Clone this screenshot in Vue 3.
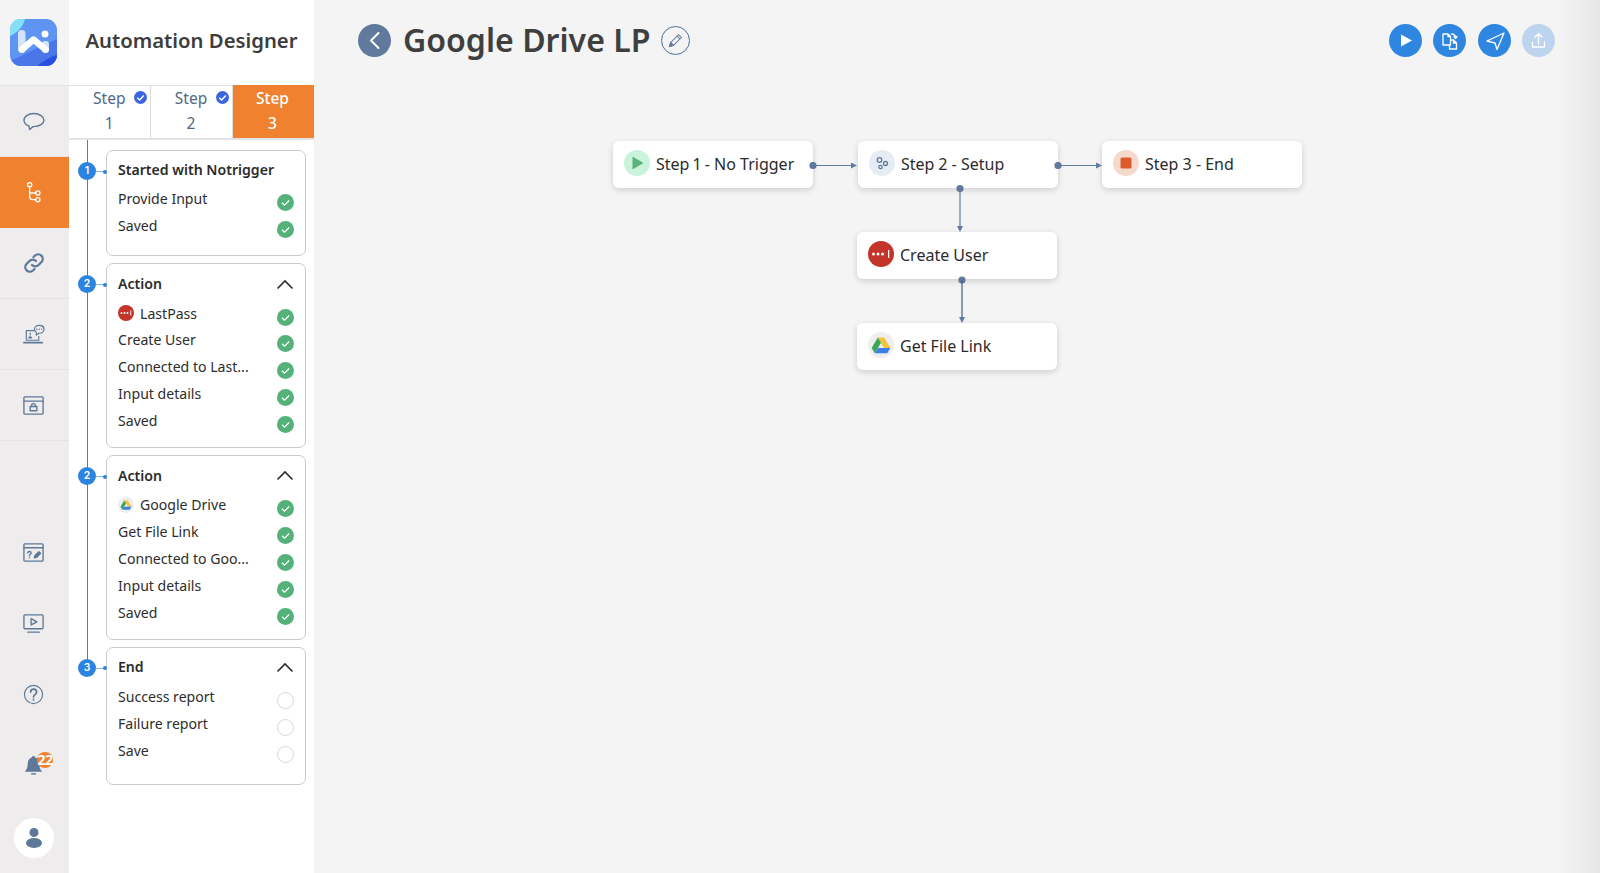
<script setup>
const cards = [
  { num: 1, title: 'Started with Notrigger', kind: 'first', rows: [
    { t: 'Provide Input', done: true }, { t: 'Saved', done: true } ] },
  { num: 2, title: 'Action', chevron: true, rows: [
    { t: 'LastPass', icon: 'lastpass', done: true }, { t: 'Create User', done: true },
    { t: 'Connected to Last...', done: true }, { t: 'Input details', done: true }, { t: 'Saved', done: true } ] },
  { num: 2, title: 'Action', chevron: true, rows: [
    { t: 'Google Drive', icon: 'drive', done: true }, { t: 'Get File Link', done: true },
    { t: 'Connected to Goo...', done: true }, { t: 'Input details', done: true }, { t: 'Saved', done: true } ] },
  { num: 3, title: 'End', chevron: true, kind: 'last', rows: [
    { t: 'Success report' }, { t: 'Failure report' }, { t: 'Save' } ] },
]
const nodes = [
  { t: 'Step 1 - No Trigger', x: 299, y: 56, icon: 'play' },
  { t: 'Step 2 - Setup', x: 544, y: 56, icon: 'gears' },
  { t: 'Step 3 - End', x: 788, y: 56, icon: 'stop' },
  { t: 'Create User', x: 543, y: 147, icon: 'lastpass' },
  { t: 'Get File Link', x: 543, y: 238, icon: 'drive' },
]
const nodeStyle = n => ({ left: n.x + 'px', top: n.y + 'px' })
</script>

<template>
  <div class="app">
    <aside class="rail">
      <div class="logo-box">
        <svg class="logo" viewBox="0 0 47 47">
          <defs><clipPath id="lc"><rect width="47" height="47" rx="11" /></clipPath></defs>
          <g clip-path="url(#lc)">
            <rect width="47" height="47" fill="#5e95f3" />
            <path d="M0 0h15C13 8 7 14 0 17z" fill="#84e0f5" />
            <path d="M0 42C14 36 32 26 47 20V47H0z" fill="#4a76ea" />
            <path d="M27 47C33 42 40 38 47 36V47z" fill="#2a4fe0" />
            <rect x="8" y="11" width="7.500" height="23" rx="3.700" fill="#d4e2fb" />
            <rect x="32" y="22" width="7" height="12" rx="3" fill="#d4e2fb" />
            <path d="M12 30.500l11.500-10 12 10" fill="none" stroke="#fff" stroke-width="6.500" stroke-linecap="round" stroke-linejoin="round" />
            <circle cx="35" cy="15" r="3.500" fill="#fff" />
          </g>
        </svg>
      </div>
      <div class="rail-item">
        <svg viewBox="0 0 24 24" class="ri big"><path d="M12 4.500c-5.500 0-10 2.900-10 6.700 0 2.500 2 4.700 5 5.800l.6 3.500 3.500-2.900h.9c5.500 0 10-3 10-6.400S17.500 4.500 12 4.500z" /></svg>
      </div>
      <div class="rail-item active">
        <svg viewBox="0 0 24 24" class="ri"><circle cx="8" cy="4" r="2.200" /><circle cx="16.500" cy="12.500" r="2.200" /><circle cx="16.500" cy="19.500" r="2.200" /><path d="M8 6.200V16.500c0 2 1 3 3 3h3.300M8 12.500h6.300" /></svg>
      </div>
      <div class="rail-item">
        <svg viewBox="0 0 24 24" class="ri thick big"><path d="M10 14a4.500 4.500 0 0 0 6.500 0l3-3A4.600 4.600 0 0 0 13 4.500l-1.500 1.500" /><path d="M14 10a4.500 4.500 0 0 0-6.500 0l-3 3a4.600 4.600 0 0 0 6.500 6.500l1.500-1.500" /></svg>
      </div>
      <div class="rail-item">
        <svg viewBox="0 0 24 24" class="ri thin"><path d="M14 8H4.500v10h13v-4" /><path d="M2 20.500h19" stroke-width="1.800" /><path d="M7 15.500c0-1.500 3-1.500 3 0zM8.500 10.500v2" /><path d="M18 2.500c-2.800 0-5 1.800-5 4 0 1.300.8 2.500 2 3.200v3l2.500-2H18c2.800 0 5-1.800 5-4.200s-2.200-4-5-4z" fill="#eeeced" /><path d="M15.500 6.500h.01M18 6.500h.01M20.500 6.500h.01" stroke-width="1.500" /></svg>
      </div>
      <div class="rail-item">
        <svg viewBox="0 0 24 24" class="ri"><rect x="2" y="3" width="20" height="18" rx="1" /><path d="M2 7.500h20" /><rect x="8.500" y="13" width="7" height="4.500" /><path d="M10 13v-1a2 2 0 0 1 4 0v1" /></svg>
      </div>
      <div class="rail-spacer"></div>
      <div class="rail-foot">
        <svg viewBox="0 0 24 24" class="ri"><rect x="2" y="3" width="20" height="18" rx="1" /><path d="M2 7h20" /><path d="M6 12.500c0-2 3.500-2 3.500 0 0 1.300-1.700 1.300-1.700 3M7.800 17.500h.01" /><path d="M13 17.500l.6-2.400 4-4 1.800 1.800-4 4z" fill="#5d7898" /></svg>
      </div>
      <div class="rail-foot">
        <svg viewBox="0 0 24 24" class="ri"><rect x="2" y="3" width="20" height="14.500" rx="1" /><path d="M9.500 7l6 3.300-6 3.200zM6 21h12" /></svg>
      </div>
      <div class="rail-foot">
        <svg viewBox="0 0 24 24" class="ri thin"><circle cx="12" cy="12" r="9.500" /><path d="M9 9.500c0-4 6.200-4 6.200 0 0 2.600-3.200 2.600-3.200 5M12 17.200v.3" stroke-width="1.800" /></svg>
      </div>
      <div class="rail-foot bell">
        <svg viewBox="0 0 24 24" class="ri solid"><path d="M12 2c-1 0-1.500.7-1.500 1.500C7.500 4.500 6 7 6 10c0 4-1 6.500-3 8.500h18c-2-2-3-4.500-3-8.500 0-3-1.500-5.500-4.500-6.500C13.500 2.700 13 2 12 2z" /><path d="M9.500 20h5v1.500h-5z" /></svg>
        <span class="count">22</span>
      </div>
      <div class="rail-user">
        <div class="avatar">
          <svg viewBox="0 0 24 24"><circle cx="12" cy="6.500" r="4.500" /><ellipse cx="12" cy="17" rx="8" ry="5" /></svg>
        </div>
      </div>
    </aside>

    <section class="panel">
      <div class="panel-head">Automation Designer</div>
      <div class="tabs">
        <div class="tab"><span>Step</span><span>1</span><i class="tick"><svg viewBox="0 0 12 12"><path d="M3 6.200l2.200 2.100L9 4.200" /></svg></i></div>
        <div class="tab"><span>Step</span><span>2</span><i class="tick"><svg viewBox="0 0 12 12"><path d="M3 6.200l2.200 2.100L9 4.200" /></svg></i></div>
        <div class="tab on"><span>Step</span><span>3</span></div>
      </div>
      <div class="flow">
        <div class="line"></div>
        <div v-for="(c, i) in cards" :key="i" class="card" :class="c.kind">
          <span class="badge">{{ c.num }}</span>
          <span class="link"></span>
          <div class="card-head">
            <span class="head-text">{{ c.title }}</span>
            <svg v-if="c.chevron" class="chev" viewBox="0 0 18 11"><path d="M1.500 9.500L9 2l7.500 7.500" /></svg>
          </div>
          <div v-for="r in c.rows" :key="r.t" class="row">
            <span class="row-text">
              <svg v-if="r.icon === 'lastpass'" class="mini" viewBox="0 0 16 16"><circle cx="8" cy="8" r="8" fill="#c4342a" /><circle cx="3.500" cy="8" r="1" fill="#fff" /><circle cx="6.500" cy="8" r="1" fill="#fff" /><circle cx="9.500" cy="8" r="1" fill="#fff" /><rect x="12.300" y="5.500" width=".9" height="5" fill="#fff" /></svg>
              <svg v-if="r.icon === 'drive'" class="mini" viewBox="0 0 16 16"><circle cx="8" cy="8" r="8" fill="#eeeeee" /><path d="M6.200 3.500h3.600l3.700 6.300h-3.600z" fill="#f5c33b" /><path d="M6.200 3.500L2.500 9.800l1.800 3 3.700-6.300z" fill="#3aa757" /><path d="M4.300 12.800h7.400l1.800-3H6.100z" fill="#3f7ee8" /></svg>
              {{ r.t }}
            </span>
            <span v-if="r.done" class="ok"><svg viewBox="0 0 17 17"><path d="M5 8.800l2.500 2.300L12.200 6.500" /></svg></span>
            <span v-else class="todo"></span>
          </div>
        </div>
      </div>
    </section>

    <main class="main">
      <header class="top">
        <div class="back"><svg viewBox="0 0 33 33"><path d="M20.500 9l-7.500 7.500 7.500 7.500" /></svg></div>
        <h1>Google Drive LP</h1>
        <div class="edit"><svg viewBox="0 0 24 24"><path d="M4.500 19.500l1.500-5L15.800 4.700l3.500 3.500-9.800 9.800z" /><path d="M4.500 19.500l1.500-5 3.500 3.500z" fill="#5f7a9c" /><path d="M14 6.500l3.500 3.500" /></svg></div>
        <div class="actions">
          <div class="act"><svg viewBox="0 0 33 33"><path d="M12 10.500l11 6-11 6z" fill="#fff" stroke="none" /></svg></div>
          <div class="act"><svg viewBox="0 0 33 33"><path d="M10 10h5l2.500 2.500V21H10zM15 10v2.500h2.500M17.500 16h3l3 3v6h-7v-4M20.500 16v3h3M18.500 10c2.500 0 4 1.500 4 4M21 12.500l1.500 2 1.500-2" /></svg></div>
          <div class="act"><svg viewBox="0 0 33 33"><path d="M26 9L9 17l8 2 2 6.500z" /></svg></div>
          <div class="act off"><svg viewBox="0 0 33 33"><path d="M16.500 20V9.500M13 13l3.500-3.500L20 13M10.500 18v5h12v-5" /></svg></div>
        </div>
      </header>
      <div class="canvas">
        <div v-for="n in nodes" :key="n.t" class="node" :style="nodeStyle(n)">
          <span class="nicon" :class="n.icon">
            <svg v-if="n.icon === 'play'" viewBox="0 0 26 26"><path d="M8.500 6.500l11 6.500-11 6.500z" fill="#5ab27d" /></svg>
            <svg v-if="n.icon === 'gears'" viewBox="0 0 26 26"><g fill="none" stroke="#5f7a9c" stroke-width="1.300"><circle cx="10.500" cy="10" r="2.300" /><circle cx="16.500" cy="13.500" r="2" /><circle cx="11.500" cy="17" r="1.700" /></g></svg>
            <svg v-if="n.icon === 'stop'" viewBox="0 0 26 26"><rect x="7.500" y="7.500" width="11" height="11" rx="1.500" fill="#dc5a2e" /></svg>
            <svg v-if="n.icon === 'lastpass'" viewBox="0 0 26 26"><circle cx="13" cy="13" r="13" fill="#c4342a" /><circle cx="5.500" cy="13" r="1.500" fill="#fff" /><circle cx="10" cy="13" r="1.500" fill="#fff" /><circle cx="14.500" cy="13" r="1.500" fill="#fff" /><rect x="20" y="9" width="1.300" height="8" fill="#fff" /></svg>
            <svg v-if="n.icon === 'drive'" viewBox="0 0 26 26"><path d="M9.800 5.500h6.400l6.200 10.500h-6.400z" fill="#f5c33b" /><path d="M9.800 5.500L3.700 16l3.100 5.200L13 10.700z" fill="#3aa757" /><path d="M6.800 21.200h12.400l3.200-5.200H10z" fill="#3f7ee8" /></svg>
          </span>
          <span class="ntext">{{ n.t }}</span>
        </div>
        <svg class="wires" width="1286" height="788">
          <g stroke="#5f7a9c" stroke-width="1.200" fill="#5f7a9c">
            <circle cx="499" cy="80.500" r="3" /><path d="M499 80.500h38" /><path d="M537 77.500l6 3-6 3z" stroke="none" />
            <circle cx="744" cy="80.500" r="3" /><path d="M744 80.500h38" /><path d="M782 77.500l6 3-6 3z" stroke="none" />
            <circle cx="646" cy="103.500" r="3" /><path d="M646 103.500v38" /><path d="M643 141l3 6 3-6z" stroke="none" />
            <circle cx="648" cy="195" r="3" /><path d="M648 195v37" stroke="#3f5f88" /><path d="M645 232l3 6 3-6z" stroke="none" />
          </g>
        </svg>
      </div>
    </main>
  </div>
</template>

<style>
html, body { margin: 0; padding: 0; background: #f4f4f4; }
</style>

<style scoped>
.app {
  display: flex;
  width: 1600px;
  height: 873px;
  overflow: hidden;
  font-family: "Noto Sans", "Open Sans", sans-serif;
  color: #2b2b2b;
}
.rail {
  width: 69px;
  flex: none;
  background: #eeeced;
  display: flex;
  flex-direction: column;
}
.logo-box {
  height: 86px;
  background: #f4f4f4;
  border-bottom: 1px solid #e3e3e3;
  box-sizing: border-box;
  display: flex;
  align-items: center;
  justify-content: center;
  padding: 0 2px 1px 0;
}
.logo { width: 47px; height: 47px; }
.rail-item {
  height: 71px;
  box-sizing: border-box;
  border-bottom: 1px solid #e3e1e2;
  display: flex;
  align-items: center;
  justify-content: center;
  padding-right: 2px;
}
.rail-item.active { background: #f0812f; border-bottom-color: #f0812f; }
.rail-item.active .ri { stroke: #fff; }
.ri {
  width: 23px;
  height: 23px;
  fill: none;
  stroke: #5d7898;
  stroke-width: 1.400;
  stroke-linecap: round;
  stroke-linejoin: round;
}
.ri.big { width: 24px; height: 24px; }
.ri.thick { stroke-width: 2.200; }
.ri.thin { stroke-width: 1.200; }
.ri.solid { fill: #5d7898; stroke: none; }
.rail-spacer { flex: 1; }
.rail-foot {
  height: 71px;
  display: flex;
  align-items: center;
  justify-content: center;
  position: relative;
  padding-right: 2px;
}
.count {
  position: absolute;
  left: 37px;
  top: 22px;
  width: 16px;
  height: 16px;
  border-radius: 50%;
  background: #f0812f;
  color: #fff;
  font-size: 14px;
  font-weight: 700;
  line-height: 16px;
  text-align: center;
  letter-spacing: -.6px;
}
.rail-user {
  height: 72px;
  box-sizing: border-box;
  padding: 17px 2px 0 0;
  display: flex;
  align-items: flex-start;
  justify-content: center;
}
.avatar {
  width: 40px;
  height: 40px;
  border-radius: 50%;
  background: #fff;
  display: flex;
  align-items: center;
  justify-content: center;
}
.avatar svg { width: 24px; height: 24px; fill: #5d7898; }

.panel {
  width: 245px;
  flex: none;
  background: #fff;
  display: flex;
  flex-direction: column;
}
.panel-head {
  height: 85px;
  display: flex;
  align-items: center;
  justify-content: center;
  font-size: 20.300px;
  font-weight: 600;
  color: #3d3d3d;
  padding-bottom: 6px;
  box-sizing: border-box;
}
.tabs {
  display: grid;
  grid-template-columns: 81.500px 82px 81px;
  height: 55px;
  box-sizing: border-box;
  border-bottom: 2px solid #e3e3e3;
}
.tab {
  display: flex;
  flex-direction: column;
  align-items: center;
  position: relative;
  color: #4f6788;
  font-size: 15.500px;
  line-height: 24.500px;
  box-sizing: border-box;
  border-top: 1px solid #e3e3e3;
  border-right: 1px solid #dcdcdc;
}
.tab.on { background: #f0812f; color: #fff; border-color: #f0812f; font-weight: 500; }
.tick {
  position: absolute;
  top: 5px;
  right: 3px;
  width: 13px;
  height: 13px;
  border-radius: 50%;
  background: #3a66e0;
  display: block;
}
.tick svg { display: block; width: 13px; height: 13px; fill: none; stroke: #fff; stroke-width: 1.300; }

.flow {
  position: relative;
  padding: 10px 8px 0 37px;
  display: flex;
  flex-direction: column;
  gap: 7.200px;
}
.line {
  position: absolute;
  left: 18px;
  top: 0;
  width: 1px;
  height: 526px;
  background: #3d84d6;
}
.card {
  position: relative;
  border: 1px solid #c9c9c9;
  border-radius: 7px;
  padding: 0 10px 9px 11px;
  background: #fff;
}
.card.first { padding-bottom: 12px; }
.card.last { padding-bottom: 16px; }
.badge {
  position: absolute;
  left: -29px;
  top: 11px;
  width: 18px;
  height: 18px;
  border-radius: 50%;
  background: #2c83e2;
  color: #fff;
  font-family: "Inter", sans-serif;
  font-size: 10.500px;
  font-weight: 600;
  line-height: 18px;
  text-align: center;
}
.link {
  position: absolute;
  left: -11px;
  top: 20px;
  width: 10px;
  height: 1px;
  background: #7fb2ea;
}
.link::after {
  content: "";
  position: absolute;
  right: -1px;
  top: -1.500px;
  width: 4px;
  height: 4px;
  border-radius: 50%;
  background: #2c83e2;
}
.card-head {
  height: 39.300px;
  display: flex;
  align-items: center;
  justify-content: space-between;
  font-size: 14.100px;
  font-weight: 600;
  color: #2b2b2b;
  padding-right: 1px;
}
.card.first .card-head { height: 38.500px; }
.head-text { padding-bottom: 1px; }
.chev { width: 18px; height: 11px; fill: none; stroke: #2b2b2b; stroke-width: 1.600; }
.row {
  height: 26.850px;
  display: flex;
  align-items: center;
  justify-content: space-between;
  padding-right: 1px;
}
.row-text {
  font-size: 14.100px;
  padding-bottom: 8px;
  display: flex;
  align-items: center;
  gap: 6px;
  white-space: nowrap;
  color: #2d2d2d;
}
.mini { width: 16px; height: 16px; flex: none; }
.ok, .todo { width: 17px; height: 17px; border-radius: 50%; flex: none; box-sizing: border-box; }
.ok { background: #55b17a; }
.ok svg { display: block; width: 17px; height: 17px; fill: none; stroke: #fff; stroke-width: 1.200; }
.todo { border: 1px solid #d8d8d8; }

.main {
  flex: 1;
  min-width: 0;
  display: flex;
  flex-direction: column;
  background: linear-gradient(90deg, #f4f4f4 0, #f4f4f4 1245px, #e6e6e6 100%);
}
.top {
  height: 85px;
  flex: none;
  box-sizing: border-box;
  padding: 0 45px 5px 44px;
  display: flex;
  align-items: center;
}
.back {
  width: 33px;
  height: 33px;
  border-radius: 50%;
  background: #5f7a9c;
}
.back svg { display: block; width: 33px; height: 33px; fill: none; stroke: #fff; stroke-width: 2; stroke-linecap: round; stroke-linejoin: round; }
h1 {
  margin: -2px 0 0 12px;
  font-size: 32.100px;
  font-weight: 600;
  color: #3f3f3f;
}
.edit {
  margin-left: 10px;
  width: 29px;
  height: 29px;
  border-radius: 50%;
  border: 1px solid #4f6f98;
  box-sizing: border-box;
  display: flex;
  align-items: center;
  justify-content: center;
}
.edit svg { width: 19px; height: 19px; fill: none; stroke: #5f7a9c; stroke-width: 1.300; }
.actions { margin-left: auto; display: flex; gap: 11.300px; }
.act {
  width: 33px;
  height: 33px;
  border-radius: 50%;
  background: #2f86e0;
}
.act.off { background: #bdd4ef; }
.act svg { display: block; width: 33px; height: 33px; fill: none; stroke: #fff; stroke-width: 1.300; stroke-linejoin: round; stroke-linecap: round; }
.canvas { position: relative; flex: 1; }
.wires { position: absolute; left: 0; top: 0; pointer-events: none; }
.node {
  position: absolute;
  width: 200px;
  height: 46.500px;
  box-sizing: border-box;
  background: #fff;
  border-radius: 6px;
  box-shadow: 0 2px 6px rgba(0, 0, 0, .16);
  display: flex;
  align-items: center;
  padding-left: 11px;
  gap: 6px;
}
.nicon {
  width: 26px;
  height: 26px;
  border-radius: 50%;
  flex: none;
  margin-top: -2px;
}
.nicon svg { display: block; width: 26px; height: 26px; }
.nicon.play { background: #caf3dc; }
.nicon.gears { background: #e6ecf4; }
.nicon.stop { background: #f6d9cd; }
.nicon.drive { background: #eeeeee; }
.ntext { font-size: 16px; color: #2b2b2b; font-variant-numeric: proportional-nums; }
</style>
